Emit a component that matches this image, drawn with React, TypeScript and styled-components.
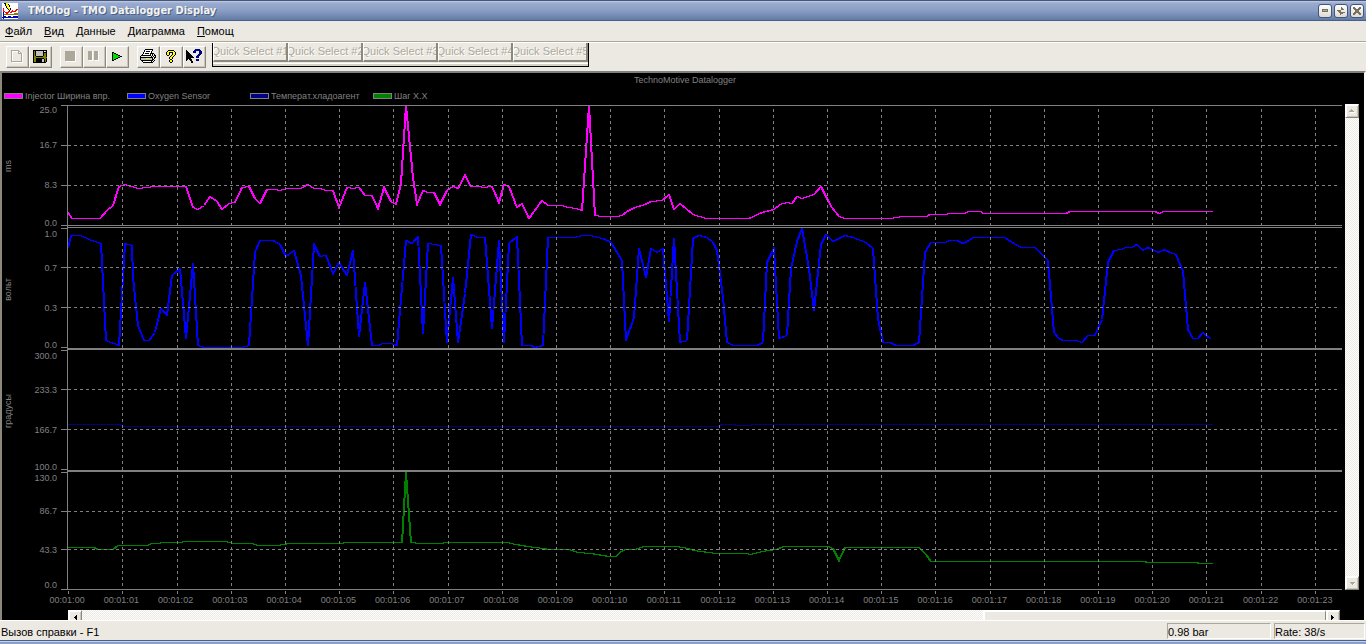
import React from "react";
import styled, { createGlobalStyle, css } from "styled-components";

const FACE = "#ece9e2";
const SHADOW = "#aca899";
const GRID = "#808080";
const UI_FONT = '"Liberation Sans", Arial, sans-serif';
const TITLE_FONT = '"DejaVu Sans Condensed", "DejaVu Sans", sans-serif';
const CHART_FONT = '"Liberation Sans", Arial, sans-serif';

const GlobalStyle = createGlobalStyle`
  * { box-sizing: border-box; }
  body { margin: 0; background: ${FACE}; font: 11px/14px ${UI_FONT}; color: #000; }
  button { margin: 0; padding: 0; font: inherit; color: inherit; border-radius: 0; }
  svg { display: block; }
`;

const Window = styled.div`
  display: flex;
  flex-direction: column;
  min-height: 100vh;
`;

const TitleBar = styled.header`
  display: flex;
  align-items: center;
  gap: 10px;
  height: 21px;
  padding: 0 2px;
  border-top: 1px solid #46557a;
  border-bottom: 1px solid #46608c;
  background: linear-gradient(#c3cfe6 0, #9aabcf 2px, #8a9ec5 50%, #627ba5 100%);
`;

const TitleText = styled.h1`
  flex: 1;
  margin: 0;
  font: bold 11px/16px ${TITLE_FONT};
  color: #f4f3ee;
  text-shadow: 1px 1px 0 #4c5f88;
`;

const WindowButtons = styled.div`
  display: flex;
  gap: 2px;
`;

const WindowButton = styled.button`
  display: grid;
  place-items: center;
  width: 14px;
  height: 14px;
  border: 1px solid #41557f;
  border-radius: 3px;
  background: linear-gradient(#fff, #dedad0);
`;

const MenuBar = styled.nav`
  display: flex;
  gap: 12px;
  height: 21px;
  padding: 3px 5px;
  border-bottom: 1px solid ${SHADOW};
`;

const MenuItem = styled.a`
  display: block;
  color: #000;
  text-decoration: none;
  &::first-letter { text-decoration: underline; }
`;

const ToolBar = styled.div`
  display: flex;
  align-items: flex-start;
  gap: 6px;
  height: 29px;
  padding-left: 6px;
  border-top: 1px solid #fff;
`;

const ToolGroups = styled.div`
  display: flex;
  gap: 8px;
  padding-top: 3px;
`;

const ToolGroup = styled.div`
  display: flex;
`;

const raised = css`
  border: 1px solid;
  border-color: #fff #8c897c #8c897c #fff;
  background: ${FACE};
`;

const ToolButton = styled.button`
  ${raised}
  display: grid;
  place-items: center;
  width: 23px;
  height: 22px;
  padding: 0 2px 2px 0;
  box-shadow: inset -1px -1px 0 #c9c5b8;
`;

const QuickPanel = styled.div`
  display: flex;
  height: 24px;
  padding-bottom: 4px;
  border: solid #000;
  border-width: 0 1px 1px;
  box-shadow: inset 0 -2px 0 #d4d0c6, inset 0 -3px 0 #fff;
`;

const QuickButton = styled.button`
  ${raised}
  display: flex;
  justify-content: center;
  width: 75px;
  overflow: hidden;
  border-width: 0 2px 2px 1px;
  font: 11px/17px ${CHART_FONT};
  color: ${SHADOW};
  text-shadow: 1px 1px 0 #fff;
  white-space: nowrap;
`;

const ChartView = styled.main`
  flex: 1;
  display: flex;
  flex-direction: column;
  border: solid;
  border-width: 2px 2px 0;
  border-color: ${GRID} #fff #fff #8c897c;
  background: #000;
  color: ${GRID};
  font: 9px/12px ${CHART_FONT};
`;

const ChartTitle = styled.h2`
  margin: 1px 0 4px;
  padding-left: 4px;
  font: 9px/12px ${CHART_FONT};
  text-align: center;
`;

const Legend = styled.ul`
  display: flex;
  margin: 0 0 2px;
  padding: 0 2px;
  list-style: none;
`;

const LegendItem = styled.li`
  display: flex;
  align-items: center;
  gap: 2px;
  width: 123px;
  white-space: nowrap;
`;

const Swatch = styled.span<{ $color: string }>`
  width: 19px;
  height: 6px;
  border: 1px solid ${GRID};
  background: ${(p) => p.$color};
`;

const PlotRow = styled.div`
  flex: 1;
  display: flex;
  padding-right: 5px;
`;

const Axes = styled.div`
  display: flex;
  flex-direction: column;
  width: 59px;
  padding: 0 4px 4px 0;
`;

const Axis = styled.div<{ $weight: number }>`
  flex: ${(p) => p.$weight} 1 0;
  display: flex;
  justify-content: space-between;
`;

const Unit = styled.span`
  align-self: center;
  writing-mode: vertical-rl;
  rotate: 180deg;
`;

const Ticks = styled.div`
  display: grid;
  grid-template-rows: 34fr 40fr 37fr 11fr;
  text-align: right;
`;

const TickLabel = styled.span`
  height: 10px;
`;

const PlotDrawing = styled.svg`
  flex: 1;
  min-width: 0;
  contain: size;
  shape-rendering: crispEdges;
  polyline, path { fill: none; stroke-width: 1px; vector-effect: non-scaling-stroke; }
`;

const dither = css`
  background: repeating-conic-gradient(#ece9e2 0 25%, #fff 0 50%) 0 0 / 2px 2px;
`;

const VScroll = styled.div`
  ${dither}
  display: flex;
  flex-direction: column;
  justify-content: space-between;
  width: 14px;
  margin: 0 0 4px 3px;
`;

const ScrollButton = styled.button`
  ${raised}
  display: grid;
  place-items: center;
  flex-shrink: 0;
  width: 14px;
  height: 14px;
  box-shadow: inset 1px 1px 0 #fff, inset -1px -1px 0 #c9c5b8;
`;

const TimeLabels = styled.div`
  display: grid;
  grid-template-columns: repeat(24, 1fr);
  margin: 0 22px 4px 38px;
  text-align: center;
`;

const HScroll = styled.div`
  ${dither}
  display: flex;
  height: 10px;
  margin: 0 24px 0 66px;
  overflow: hidden;
`;

const Thumb = styled.div`
  width: 27%;
  height: 14px;
  margin-left: auto;
  border: solid #fff;
  border-width: 2px 0 0 2px;
  border-right: 1px solid #8c897c;
  background: ${FACE};
`;

const StatusBar = styled.footer`
  display: flex;
  gap: 3px;
  height: 20px;
  padding: 2px 1px 1px;
  border-top: 1px solid #fff;
  line-height: 18px;
`;

const StatusText = styled.span`
  flex: 1;
`;

const StatusPane = styled.span<{ $width: number }>`
  width: ${(p) => p.$width}px;
  border: 1px solid;
  border-color: ${SHADOW} #fff #fff ${SHADOW};
  line-height: 16px;
`;

const TaskEdge = styled.div`
  height: 4px;
  border-top: 1px solid #4a618f;
  background: linear-gradient(#c3d0ea 1px, #8c9fc8 1px);
`;

const PANELS = [
  { weight: 124, unit: "ms", ticks: ["25.0", "16.7", "8.3", "0.0"] },
  { weight: 122, unit: "вольт", ticks: ["1.0", "0.7", "0.3", "0.0"] },
  { weight: 122, unit: "градусы", ticks: ["300.0", "233.3", "166.7", "100.0"] },
  { weight: 118, unit: "", ticks: ["130.0", "86.7", "43.3", "0.0"] },
];

const LEGEND = [
  { name: "Injector Ширина впр.", color: "#ff00ff" },
  { name: "Oxygen Sensor", color: "#0000ff" },
  { name: "Температ.хладоагент", color: "#000080" },
  { name: "Шаг X.X", color: "#008000" },
];

const SERIES = [
  {
    color: "#ff00ff",
    points:
      "68,212 72,218 100,218 107,210 113,205 119,186 125,184 138,188 148,187 153,186 186,186 193,207 198,209 204,205 210,196 217,201 222,209 229,203 235,202 242,187 249,186 255,198 260,203 267,189 274,189 280,190 287,188 301,188 308,184 314,188 320,188 326,190 333,190 339,207 347,187 353,188 359,187 365,195 372,195 378,208 384,187 391,201 396,204 401,183 406,105 413,177 417,204 423,190 428,192 434,192 440,204 447,190 453,186 458,188 465,175 471,186 479,186 484,187 492,186 499,202 504,184 509,186 517,207 522,203 529,218 542,200 548,205 562,205 568,207 576,208 582,210 589,105 595,215 602,216 617,216 622,215 627,211 635,207 645,204 651,201 662,200 669,194 674,209 680,203 693,214 706,218 749,218 762,212 774,209 780,204 787,202 792,203 797,196 802,198 814,194 821,186 827,198 832,207 839,216 845,218 892,218 895,217 904,216 927,216 928,215 930,214 947,214 948,213 965,213 968,211 981,211 983,213 1066,213 1070,211 1155,211 1159,213 1164,211 1212,211",
  },
  {
    color: "#0000ff",
    points:
      "68,248 71,235 80,235 85,237 92,240 101,243 106,340 119,345 125,243 132,245 133,277 138,325 144,340 149,340 155,332 161,308 167,315 172,275 180,268 186,338 193,263 198,345 204,347 242,347 249,345 255,252 260,240 273,240 280,244 286,256 294,250 301,275 308,345 314,244 320,256 326,255 333,273 339,262 347,275 353,250 359,336 365,282 372,345 378,345 383,343 391,343 397,345 402,287 406,240 412,243 418,236 423,333 428,243 441,245 447,342 453,277 458,342 465,293 471,234 478,237 485,237 492,328 499,240 504,342 509,243 517,236 522,345 531,345 535,347 543,345 548,237 575,237 582,235 590,235 603,238 611,242 622,260 626,340 634,317 639,248 646,277 651,248 657,252 663,248 669,321 674,238 680,342 687,340 693,238 699,235 707,237 713,242 717,250 723,297 727,342 734,345 757,345 763,342 767,262 774,248 779,338 787,335 791,268 797,241 802,228 809,268 814,310 821,244 826,234 833,241 845,235 853,237 866,242 873,248 878,318 883,342 890,342 896,345 913,345 919,342 925,252 931,242 945,242 950,240 957,240 963,243 969,240 973,237 1005,237 1015,244 1022,247 1035,247 1048,260 1054,332 1059,338 1063,340 1076,340 1082,342 1088,335 1095,335 1102,319 1108,262 1114,250 1122,249 1125,247 1132,247 1137,244 1143,250 1148,247 1159,252 1164,249 1170,252 1176,254 1183,271 1188,329 1193,338 1198,338 1203,332 1211,339",
  },
  {
    color: "#000080",
    points: "68,424 120,424 124,426 718,426 722,424 748,425 756,424 1212,424",
  },
  {
    color: "#008000",
    points:
      "68,547 94,547 98,549 113,549 118,545 147,545 152,543 170,542 196,541 226,541 233,543 252,543 258,545 277,545 290,543 343,543 344,542 402,542 406,472 411,542 420,543 443,543 444,542 507,542 516,544 534,547 544,548 548,549 569,549 578,552 591,553 609,556 616,556 621,551 626,549 635,549 644,546 676,546 688,548 694,550 716,553 745,553 751,554 762,551 776,549 784,546 828,546 833,548 839,560 845,547 919,547 926,554 931,561 1145,561 1147,562 1197,562 1199,563 1212,563",
  },
];

const SECONDS = Array.from({ length: 24 }, (_, i) => i);
const FRAME_TICKS = [105, 145, 185, 225, 228, 267, 307, 347, 350, 389, 429, 469, 472, 511, 549, 589];
const GRID_ROWS = [145, 185, 267, 307, 389, 429, 511, 549];

const tickX = (i: number) => Math.round(68.12 + i * 54.2);

function DataPlot() {
  return (
    <PlotDrawing viewBox="61 104 1281 490" preserveAspectRatio="none" role="img" aria-label="TechnoMotive Datalogger">
      <g transform="translate(.5 .5)">
        {SERIES.map((s) => (
          <g key={s.color} stroke={s.color}>
            <polyline points={s.points} />
            <polyline points={s.points} transform="translate(-1 0)" />
          </g>
        ))}
        <g stroke={GRID}>
          {GRID_ROWS.map((y) => (
            <path key={y} d={`M67.5 ${y}H1337`} strokeDasharray="3 3" />
          ))}
          {SECONDS.slice(1).map((i) => (
            <path
              key={i}
              d={`M${tickX(i)} 108.5V225M${tickX(i)} 230.5V347M${tickX(i)} 352.5V469M${tickX(i)} 474.5V588M${tickX(i)} 590.5V594`}
              strokeDasharray="3 3"
            />
          ))}
          {FRAME_TICKS.map((y) => (
            <path key={y} d={`M60.5 ${y}H66`} />
          ))}
          <path d="M67 105V589M66.5 105H1341M66.5 225H1341.5M66.5 227H1341M66.5 348H1341.5M66.5 349H1341M66.5 470H1341.5M66.5 471H1341M66.5 589H1341.5M68 590.5V594" />
        </g>
      </g>
    </PlotDrawing>
  );
}

/* Pixel-grid icons: each row string is one pixel line, each letter a palette colour. */
const PALETTE: Record<string, string> = {
  k: "#000", w: "#fff", g: "#aca899", y: "#ffff00", o: "#808000", b: "#0000c0",
  n: "#000080", r: "#ff0000", G: "#00e000", s: "#c0c0c0", d: "#77735f",
};

function PixelIcon({ rows }: { rows: string[] }) {
  const w = Math.max(...rows.map((r) => r.length));
  return (
    <svg width={w} height={rows.length} viewBox={`0 0 ${w} ${rows.length}`} shapeRendering="crispEdges" aria-hidden="true">
      {rows.flatMap((row, y) =>
        [...row].map((c, x) => (PALETTE[c] ? <rect key={`${x}-${y}`} x={x} y={y} width="1" height="1" fill={PALETTE[c]} /> : null))
      )}
    </svg>
  );
}

const APP_ICON = [
  "wwkkyywwwwwwwwww", "wwwkyykwwwwwwwww", "wwwkyyykwwwwwwww", "wwwwkyykwwwwwwww",
  "wwwwkyywwwwwwwww", "wrwwwkyykwwwwwww", "wrwwwwkykwwwwwrr", "wrwwwwwkwwrwwrrw",
  "wrrwwwrrwrrrrrww", "wbwrrrrwrrwwwwww", "wbwwrrwwwwwwoooo", "wboooooooooooooo",
  "wbwwwwwwwwwwwwww", "wbbbwwbbbwwbbbbb", "bbbbbbbbbbbbbbbb", "wbwwwwwwwwwwwwww",
];
const NEW_ICON = [
  "gggggggg...", "gwwwwwwgg..", "gw.....gwg.", "gw.....ggggw", "gw........gw", "gw........gw",
  "gw........gw", "gw........gw", "gw........gw", "gw........gw", "gw........gw", "ggggggggggg", ".wwwwwwwwwww",
];
const SAVE_ICON = [
  "kkkkkkkkkkkkkk", "kokssssssskwsk", "kokssssssskkkk", "kokssssssskook", "kokssssssskook", "kokssssssskook",
  "kookkkkkkkoook", "koooooooooooook", "kookkkkkkkkook", "kookkkkkksskok", "kookkkkkksskok", "kookkkkkksskok",
  "kkkkkkkkkkkkk.",
].map((r) => r.slice(0, 14));
const STOP_ICON = [...Array(9).fill("ggggggggggw"), "ggggggggggw", ".wwwwwwwwww"];
const PAUSE_ICON = [...Array(9).fill("ggggw.ggggw"), ".wwww..wwww"];
const PLAY_ICON = [
  "kk........", "kGkk......", "kGGGkk....", "kGGGGGkk..", "kGGGGGGGkk", "kGGGGGkk..", "kGGGkk....", "kGkk......", "kk........",
];
const PRINT_ICON = [
  ".....kkkkkkkk...", "....kwwwwwwwk...", "....kwkkkkwk....", "...kwwwwwwwk....", "...kwkkkkwkkkk..", "..kwwwwwwwk.k.k.",
  ".kkkkkkkkkk.k.kk", "k..........k.k.k", "kkkkkkkkkkkkk.kk", "ksssssyyysssk.k.", "kssssssssssskk..", ".kkkkkkkkkkkk.k.",
  "..kwwwwwwwwk.k..", "...kkkkkkkkkk...",
];
const HELP_ICON = [
  "..kkkkkk..", ".kyyyyyyk.", "kyykkkkyyk", "kyyk..kyyk", "kyyk..kyyk", ".kk..kyyk.", "....kyyk..", "...kyyk...",
  "...kyyk...", "....kk....", "...kyyk...", "...kyyk...", "....kk....",
];
const CONTEXT_ICON = [
  ".........nnnnn..", "k.......nnnnnnn.", "kk.....nnn...nnn", "kkk....nnn...nnn", "kkkk.........nnn", "kkkkk.......nnn.",
  "kkkkkk.....nnn..", "kkkkkkk...nnn...", "kkkkkkkk..nnn...", "kkkkk...........", "kk.kkk....nnn...", "k...kk....nnn...",
  ".....kk.........", ".....kk.........",
];
const MINIMIZE = ["dddddd", "dggggd", "dddddd"];
const RESTORE = ["....d...", "....dd..", "....ddd.", "dddd....", ".ddd....", "..dddddd", "...ddd..", "...d...."];
const CLOSE = ["dd....dd", "ddd..ddd", ".dddddd.", "..dddd..", "..dddd..", ".dddddd.", "ddd..ddd", "dd....dd"];
const UP = ["..g..", ".ggg.", "ggggg", ".wwwww"];
const DOWN = ["ggggg", ".gggw", "..gw."];
const LEFT = ["...k", "..kk", ".kkk", "..kk", "...k"];
const RIGHT = ["k...", "kk..", "kkk.", "kk..", "k..."];

const TOOLS = [
  [["New", NEW_ICON], ["Save", SAVE_ICON]],
  [["Stop", STOP_ICON], ["Pause", PAUSE_ICON], ["Play", PLAY_ICON]],
  [["Print", PRINT_ICON], ["Help", HELP_ICON], ["Context help", CONTEXT_ICON]],
] as [string, string[]][][];

export default function App() {
  return (
    <Window>
      <GlobalStyle />
      <TitleBar>
        <PixelIcon rows={APP_ICON} />
        <TitleText>TMOlog - TMO Datalogger Display</TitleText>
        <WindowButtons>
          <WindowButton aria-label="Minimize"><PixelIcon rows={MINIMIZE} /></WindowButton>
          <WindowButton aria-label="Restore"><PixelIcon rows={RESTORE} /></WindowButton>
          <WindowButton aria-label="Close"><PixelIcon rows={CLOSE} /></WindowButton>
        </WindowButtons>
      </TitleBar>
      <MenuBar>
        {["Файл", "Вид", "Данные", "Диаграмма", "Помощ"].map((m) => (
          <MenuItem key={m} href="#">{m}</MenuItem>
        ))}
      </MenuBar>
      <ToolBar>
        <ToolGroups>
          {TOOLS.map((group, i) => (
            <ToolGroup key={i}>
              {group.map(([name, rows]) => (
                <ToolButton key={name} aria-label={name}><PixelIcon rows={rows} /></ToolButton>
              ))}
            </ToolGroup>
          ))}
        </ToolGroups>
        <QuickPanel>
          {[1, 2, 3, 4, 5].map((n) => (
            <QuickButton key={n} disabled>Quick Select #{n}</QuickButton>
          ))}
        </QuickPanel>
      </ToolBar>
      <ChartView>
        <ChartTitle>TechnoMotive Datalogger</ChartTitle>
        <Legend>
          {LEGEND.map((l) => (
            <LegendItem key={l.name}><Swatch $color={l.color} />{l.name}</LegendItem>
          ))}
        </Legend>
        <PlotRow>
          <Axes>
            {PANELS.map((p) => (
              <Axis key={p.weight + p.unit} $weight={p.weight}>
                <Unit>{p.unit}</Unit>
                <Ticks>
                  {p.ticks.map((t) => <TickLabel key={t}>{t}</TickLabel>)}
                </Ticks>
              </Axis>
            ))}
          </Axes>
          <DataPlot />
          <VScroll>
            <ScrollButton aria-label="Scroll up" disabled><PixelIcon rows={UP} /></ScrollButton>
            <ScrollButton aria-label="Scroll down" disabled><PixelIcon rows={DOWN} /></ScrollButton>
          </VScroll>
        </PlotRow>
        <TimeLabels>
          {SECONDS.map((s) => <span key={s}>00:01:{String(s).padStart(2, "0")}</span>)}
        </TimeLabels>
        <HScroll>
          <ScrollButton aria-label="Scroll left"><PixelIcon rows={LEFT} /></ScrollButton>
          <Thumb />
          <ScrollButton aria-label="Scroll right"><PixelIcon rows={RIGHT} /></ScrollButton>
        </HScroll>
      </ChartView>
      <StatusBar>
        <StatusText>Вызов справки - F1</StatusText>
        <StatusPane $width={104}>0.98 bar</StatusPane>
        <StatusPane $width={91}>Rate: 38/s</StatusPane>
      </StatusBar>
      <TaskEdge />
    </Window>
  );
}
